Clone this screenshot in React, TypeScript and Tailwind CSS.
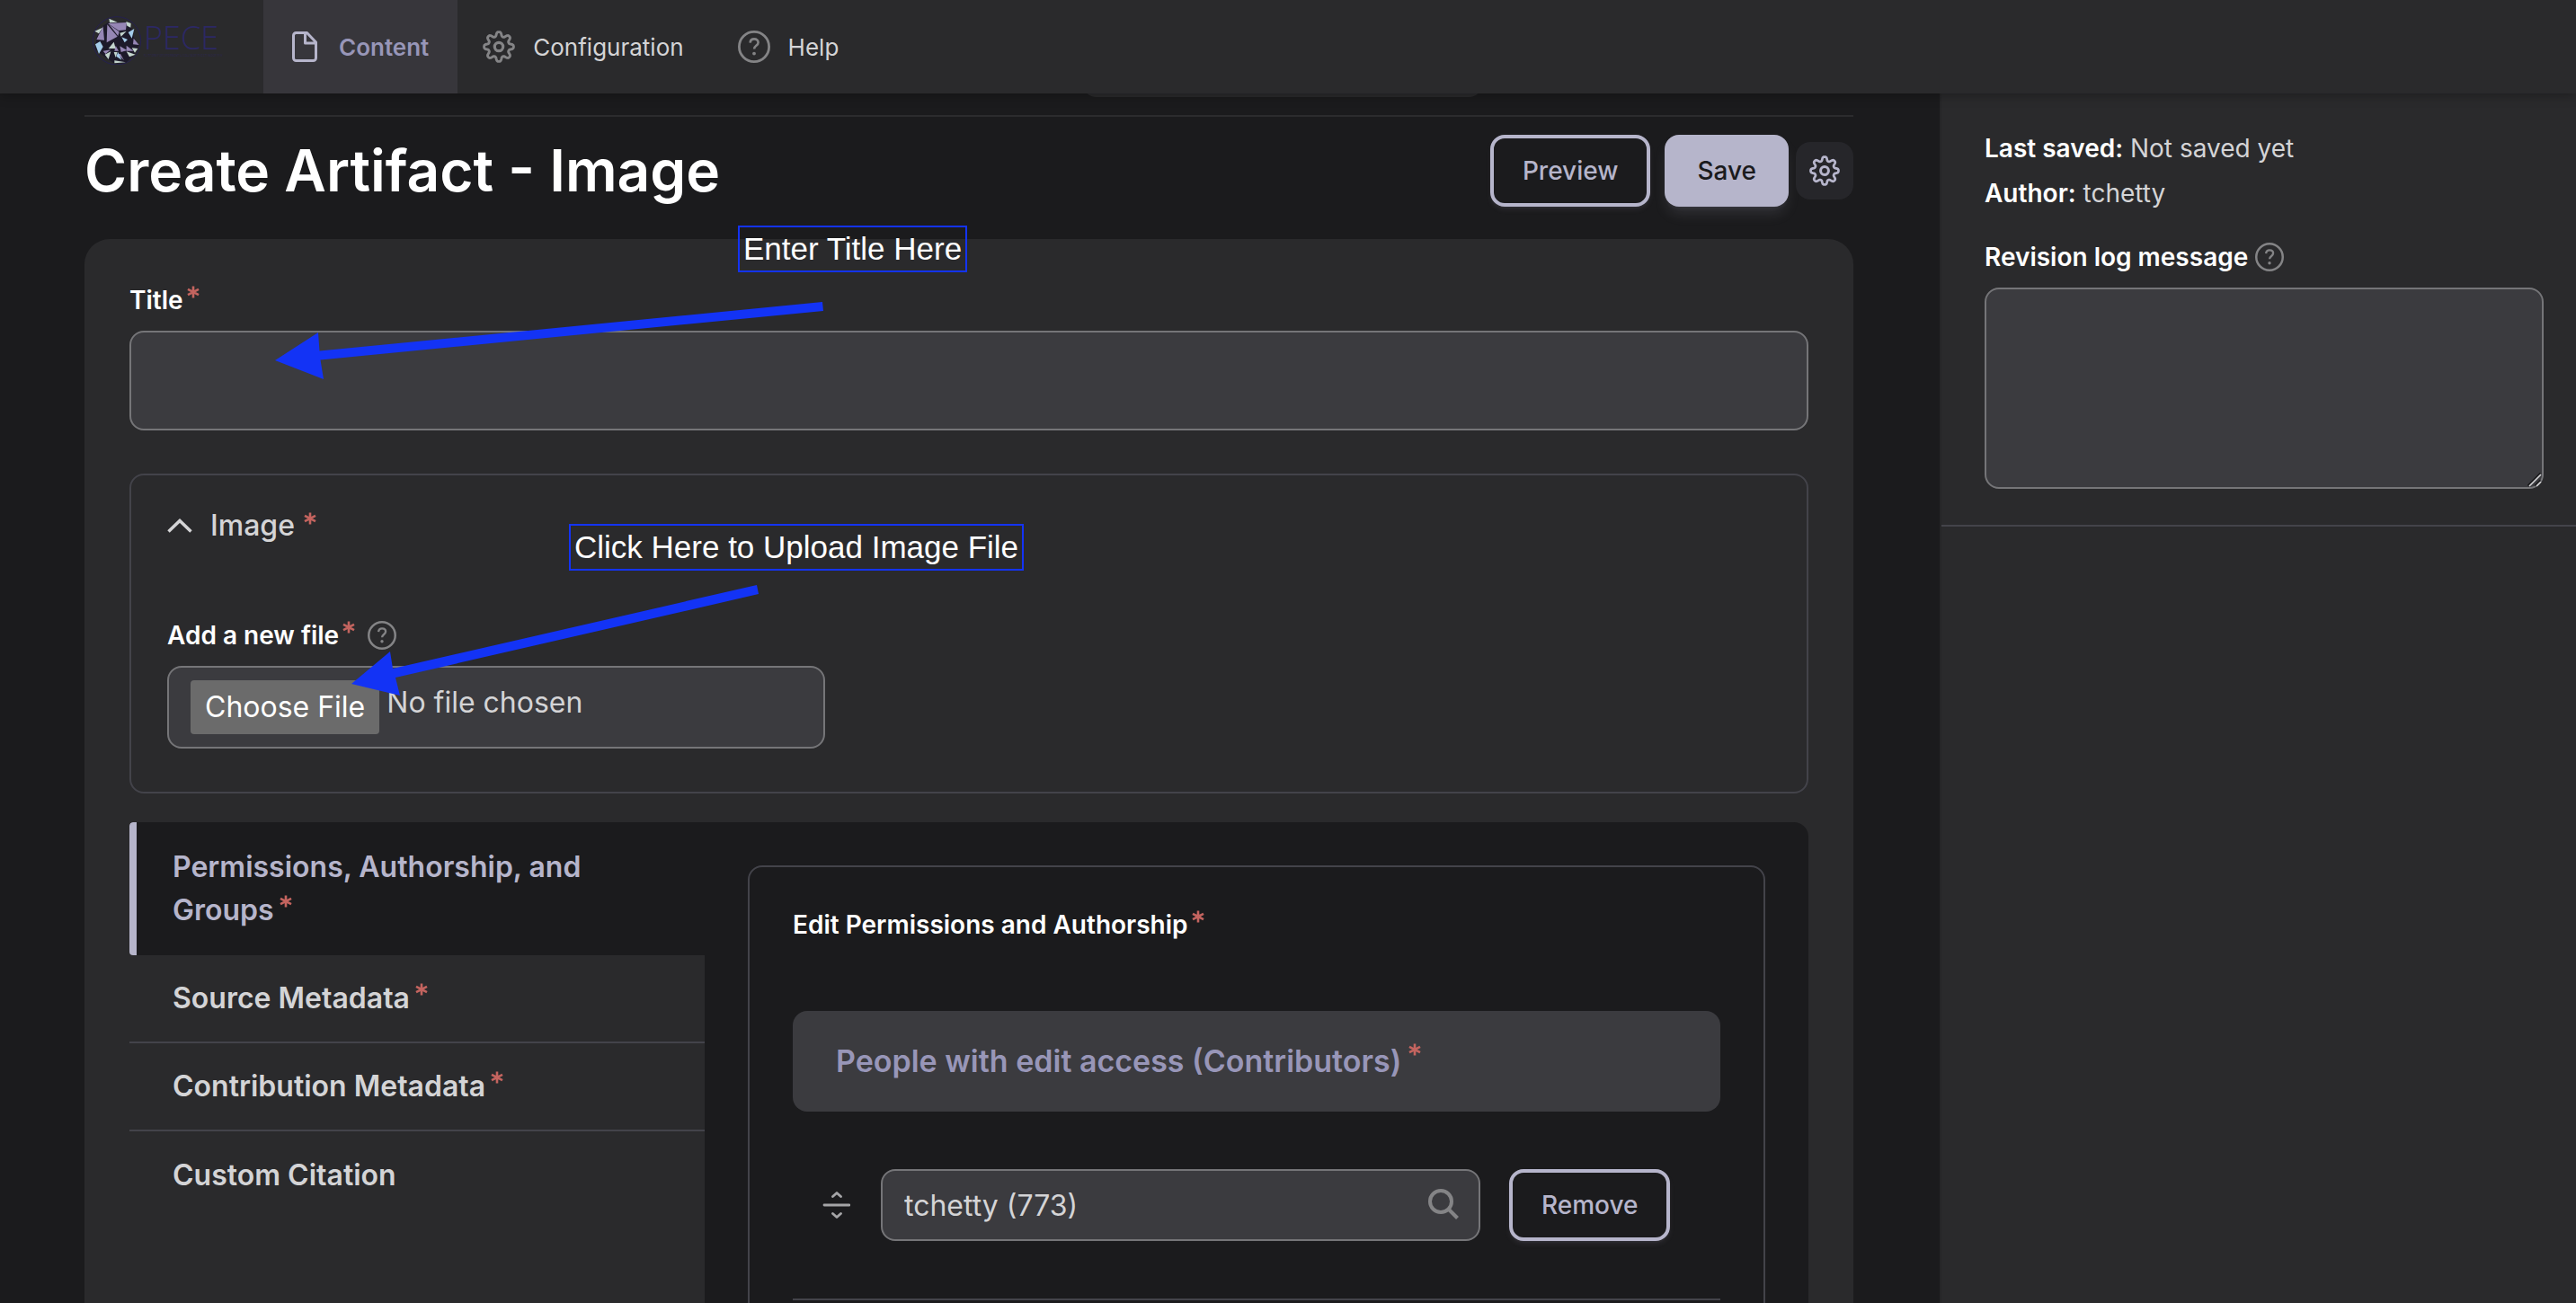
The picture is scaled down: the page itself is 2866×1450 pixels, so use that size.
import { ReactNode } from "react";

function Required({ className = "" }: { className?: string }) {
  return (
    <svg viewBox="0 0 14 14" className={`inline-block h-3.5 w-3.5 shrink-0 ${className}`} aria-hidden="true">
      <path d="M7 0.5V13.5M1 3.8L13 10.2M13 3.8L1 10.2" stroke="#c4645f" strokeWidth="2.6" fill="none" />
    </svg>
  );
}

function HelpIcon({ className = "" }: { className?: string }) {
  return (
    <svg viewBox="0 0 36 36" className={`shrink-0 ${className}`} fill="none" stroke="#848486" aria-hidden="true">
      <circle cx="18" cy="18" r="16.6" strokeWidth="2.8" />
      <path d="M13.6 13.6c.2-2.6 2-4.2 4.5-4.2 2.6 0 4.5 1.6 4.5 3.900 0 3.600-4.500 3.500-4.500 7.200" strokeWidth="2.6" />
      <circle cx="18" cy="25.6" r="1.9" fill="#848486" stroke="none" />
    </svg>
  );
}

// Eight-lobed gear outline, sampled from a polar wave around the centre.
const gearOutline = Array.from({ length: 128 }, (_, i) => {
  const angle = (i / 128) * Math.PI * 2;
  const radius = 14.1 + 2.5 * Math.tanh(1.6 * Math.cos(8 * angle));
  return `${(18 + radius * Math.cos(angle)).toFixed(2)},${(18 + radius * Math.sin(angle)).toFixed(2)}`;
}).join(" ");

function GearIcon({ className = "" }: { className?: string }) {
  return (
    <svg viewBox="0 0 36 36" className={`shrink-0 ${className}`} fill="none" stroke="currentColor" strokeWidth="2.9" strokeLinejoin="round" aria-hidden="true">
      <polygon points={gearOutline} />
      <circle cx="18" cy="18" r="4.7" strokeWidth="3.2" />
    </svg>
  );
}

function Logo() {
  return (
    <a href="#" className="flex w-[293px] shrink-0 items-start pl-[102px] pt-4" aria-label="PECE">
      <svg viewBox="18 18 168 168" className="h-14 w-14 shrink-0" aria-hidden="true">
        <circle cx="102" cy="106" r="80" fill="none" stroke="#252050" strokeWidth="3" />
        <path d="M72 46L136 44 150 62 160 98 176 120 160 152 132 180 94 182 62 160 30 134 34 96 56 56z" fill="#1d1a2a" />
        <path d="M72 48L135 45 132 70 108 72zM70 52L104 92 68 112zM76 52L110 76 106 90zM56 58L60 104 34 102zM158 98L176 120 156 118zM112 124L136 138 116 144zM134 122L158 140 134 140zM56 140L82 136 64 150zM98 122L108 140 94 140zM104 150L114 150 126 172z" fill="#9686b5" />
        <path d="M76 32L104 44 78 46zM28 74L54 62 42 82zM133 42L149 48 148 62 136 56zM112 80L134 74 116 92zM152 130L172 132 162 146zM134 142L164 152 144 160zM74 132L92 110 98 132zM62 152L82 142 74 168zM92 144L104 144 98 162zM94 172L132 178 94 181z" fill="#c3d5cd" />
        <path d="M140 78L160 66 152 98zM118 94L138 102 128 112zM30 118L46 108 56 126 42 150zM100 158L106 144 118 170z" fill="#a5cdea" />
      </svg>
      <span className="ml-0.5 mt-2 block font-['Open_Sans'] font-light text-[#2c2864]">
        <span className="block text-[36px] leading-9">PECE</span>
        <span className="block whitespace-nowrap text-[3px] leading-1">PLATFORM FOR EXPERIMENTAL COLLABORATIVE ETHNOGRAPHY</span>
      </span>
    </a>
  );
}

function FieldLabel({ htmlFor, children }: { htmlFor?: string; children: ReactNode }) {
  return (
    <label htmlFor={htmlFor} className="flex text-[28px] font-semibold leading-10 text-white">
      {children}
    </label>
  );
}

function OutlineButton({ children }: { children: ReactNode }) {
  return (
    <button type="button" className="h-20 shrink-0 rounded-2xl border-4 border-[#b6b5cb] px-8 text-[28px] font-medium text-[#b6b5cb] shadow-md shadow-[#b6b5cb]/10">
      {children}
    </button>
  );
}

const tabs = [
  { name: "Source Metadata", required: true },
  { name: "Contribution Metadata", required: true },
  { name: "Custom Citation", required: false },
];

export default function App() {
  return (
    <div className="flex h-screen flex-col overflow-hidden bg-[#1b1b1d] font-[Inter,sans-serif] text-[#d4d4d6]">
      <header className="relative z-10 flex h-26 shrink-0 bg-[#2a2a2c] text-[26px] shadow-[0_2px_12px_rgba(0,0,0,0.3)]">
        <Logo />
        <nav className="flex">
          <a href="#" className="flex items-center gap-6 bg-[#37363b] px-8 font-semibold text-[#9896b8]">
            <svg viewBox="0 0 28 34" className="h-[34px] w-7" fill="none" stroke="#b6b5cb" strokeWidth="3" strokeLinejoin="round" aria-hidden="true">
              <path d="M4.500 1.500H16.500L26.500 12V29.500a3 3 0 0 1-3 3H4.500a3 3 0 0 1-3-3V4.500a3 3 0 0 1 3-3zM14.500 2V13H26" />
            </svg>
            Content
          </a>
          <a href="#" className="flex items-center gap-5 px-7">
            <GearIcon className="h-9 w-9 text-[#848486]" />
            Configuration
          </a>
          <a href="#" className="flex items-center gap-5 px-8">
            <HelpIcon className="h-9 w-9" />
            Help
          </a>
        </nav>
      </header>

      <div className="flex min-h-0 flex-1">
        <main className="min-w-0 flex-1 overflow-hidden pl-[94px] pr-24">
          <div className="-mt-5 ml-[1110px] h-6 w-[446px] rounded-b-2xl bg-[#2a2a2c]" />
          <div className="mt-5 border-t-2 border-[#2c2c2e] pt-5">
            <div className="flex h-20 items-center">
              <h1 className="flex-1 text-[64px] font-semibold leading-20 text-white">Create Artifact - Image</h1>
              <OutlineButton>Preview</OutlineButton>
              <button type="button" className="ml-4 h-20 rounded-2xl bg-[#b6b5cb] px-9 text-[28px] font-medium text-[#1b1b1d] shadow-lg shadow-[#b6b5cb]/15">
                Save
              </button>
              <button type="button" aria-label="Settings" className="ml-2 flex size-16 items-center justify-center rounded-2xl bg-[#26262a] text-[#b6b5cb]">
                <GearIcon className="h-[34px] w-[34px]" />
              </button>
            </div>
          </div>

          <form className="relative mt-9 rounded-[28px] bg-[#2a2a2c] px-[50px] pt-12">
            <FieldLabel htmlFor="title">
              Title
              <Required className="ml-1 mt-1" />
            </FieldLabel>
            <input id="title" type="text" className="mt-3.5 block h-[111px] w-full rounded-2xl border-2 border-[#757578] bg-[#3b3b3f] px-6 text-[32px]" />

            <section className="mt-12 h-[356px] rounded-2xl border-2 border-[#43434a] px-10 pt-8">
              <button type="button" className="flex items-center text-[32px] font-medium leading-12">
                <svg viewBox="0 0 28 16" className="mr-5 h-4 w-7" fill="none" stroke="#d4d4d6" strokeWidth="3.5" aria-hidden="true">
                  <path d="M1.500 14.500L14 2.500 26.500 14.500" />
                </svg>
                Image
                <Required className="mb-4 ml-2.5" />
              </button>
              <div className="mt-[78px]">
                <FieldLabel htmlFor="file">
                  Add a new file
                  <Required className="ml-1 mt-1" />
                  <HelpIcon className="ml-3.5 mt-1 h-8 w-8" />
                </FieldLabel>
              </div>
              <input id="file" type="file" className="sr-only" />
              <label htmlFor="file" className="mt-3.5 flex h-[92px] w-[732px] gap-2 rounded-2xl border-2 border-[#757578] bg-[#3b3b3f] px-6 pt-3.5 text-[32px]">
                <span className="flex h-[60px] items-center rounded-sm bg-[#6b6b6b] px-4 text-white">Choose File</span>
                <span className="leading-[50px]">No file chosen</span>
              </label>
            </section>

            <section className="mt-8 flex h-[700px] overflow-hidden rounded-l-sm rounded-r-2xl bg-[#1b1b1d]">
              <div role="tablist" className="w-[640px] shrink-0 bg-[#2a2a2c] text-[32px] font-semibold leading-12">
                <button type="button" role="tab" aria-selected="true" className="block w-full rounded-l-sm border-l-8 border-[#b6b5cb] bg-[#1b1b1d] py-[26px] pl-10 pr-24 text-left text-[#b6b5cb]">
                  Permissions, Authorship, and Groups
                  <Required className="mb-3.5 ml-1.5 align-baseline" />
                </button>
                {tabs.map((tab) => (
                  <button key={tab.name} type="button" role="tab" aria-selected="false" className="block h-[98px] w-full border-b-2 border-[#43434a] pl-12 text-left last:border-b-0">
                    {tab.name}
                    {tab.required && <Required className="mb-3.5 ml-1.5 align-baseline" />}
                  </button>
                ))}
              </div>
              <div className="min-w-0 flex-1 px-12 pt-12">
                <div className="h-[700px] rounded-2xl border-2 border-[#43434a] px-12 pt-11">
                  <FieldLabel>
                    Edit Permissions and Authorship
                    <Required className="ml-1 mt-1" />
                  </FieldLabel>
                  <div className="mt-[76px] flex h-28 rounded-2xl bg-[#3b3b3f] px-12 text-[34px] font-semibold leading-28 text-[#9896b8]">
                    People with edit access (Contributors)
                    <Required className="ml-2 mt-9" />
                  </div>
                  <div className="mt-16 flex items-center border-b-2 border-[#43434a] pb-16">
                    <svg viewBox="0 0 32 32" className="ml-8 mr-[34px] h-8 w-8" fill="none" stroke="#a5a5a7" strokeWidth="2.8" strokeLinecap="round" strokeLinejoin="round" aria-hidden="true">
                      <path d="M3 16H31M12.500 6.500L17 2.500 21.500 6.500M12.500 25.500L17 29.500 21.500 25.500" />
                    </svg>
                    <div className="relative w-[667px]">
                      <input aria-label="Contributor" type="text" defaultValue="tchetty (773)" className="block h-20 w-full rounded-2xl border-2 border-[#757578] bg-[#3b3b3f] px-6 text-[32px]" />
                      <svg viewBox="0 0 34 34" className="absolute right-6 top-[22px] h-[34px] w-[34px]" fill="none" stroke="#848486" strokeWidth="4" aria-hidden="true">
                        <circle cx="14" cy="14" r="12" />
                        <path d="M22.500 22.500L32.500 32.500" />
                      </svg>
                    </div>
                    <div className="ml-8 flex">
                      <OutlineButton>Remove</OutlineButton>
                    </div>
                  </div>
                </div>
              </div>
            </section>

            <div className="absolute -top-[15px] left-[727px] h-[52px] whitespace-nowrap border-2 border-[#1333f5] px-1 font-['Liberation_Sans',sans-serif] text-[35px] leading-12 text-white">
              Enter Title Here
            </div>
            <svg viewBox="0 0 612 88" className="absolute left-[211px] top-[70px] h-[88px] w-[612px]" fill="#1333f5" aria-hidden="true">
              <path d="M1 65L49 34 50.500 54.500 610 0 611 10 51.500 64.500 55 86z" />
            </svg>
            <div className="absolute left-[539px] top-[317px] h-[52px] whitespace-nowrap border-2 border-[#1333f5] px-1 font-['Liberation_Sans',sans-serif] text-[35px] leading-12 text-white">
              Click Here to Upload Image File
            </div>
            <svg viewBox="0 0 460 130" className="absolute left-[294px] top-[380px] h-[130px] w-[460px]" fill="#1333f5" aria-hidden="true">
              <path d="M3 115L46 79 49 98 454 5 456 15 52 108 57 128z" />
            </svg>
          </form>
        </main>

        <aside className="w-[708px] shrink-0 border-l-2 border-[#262628] bg-[#2a2a2c]">
          <div className="border-b-2 border-[#43434a] pb-10 pl-12 pr-9 pt-9 text-[28px]">
            <p className="leading-[50px]"><b className="font-semibold text-white">Last saved:</b> Not saved yet</p>
            <p className="leading-[50px]"><b className="font-semibold text-white">Author:</b> tchetty</p>
            <div className="mt-[26px]">
              <FieldLabel htmlFor="log">
                Revision log message
                <HelpIcon className="ml-2 mt-1 h-8 w-8" />
              </FieldLabel>
            </div>
            <div className="relative mt-3.5">
              <textarea id="log" className="block h-56 w-full resize-none rounded-2xl border-2 border-[#757578] bg-[#3b3b3f] p-4" />
              <svg viewBox="0 0 16 16" className="pointer-events-none absolute bottom-0.5 right-0.5 h-4 w-4" fill="none" aria-hidden="true">
                <path d="M0.500 14.500L14.500 0.500M8.500 14.500L14.500 8.500" stroke="#1b1b1d" strokeWidth="2" />
                <path d="M2 15L15 2M10 15L15 10" stroke="#d4d4d6" strokeWidth="1.6" />
              </svg>
            </div>
          </div>
        </aside>
      </div>
    </div>
  );
}
